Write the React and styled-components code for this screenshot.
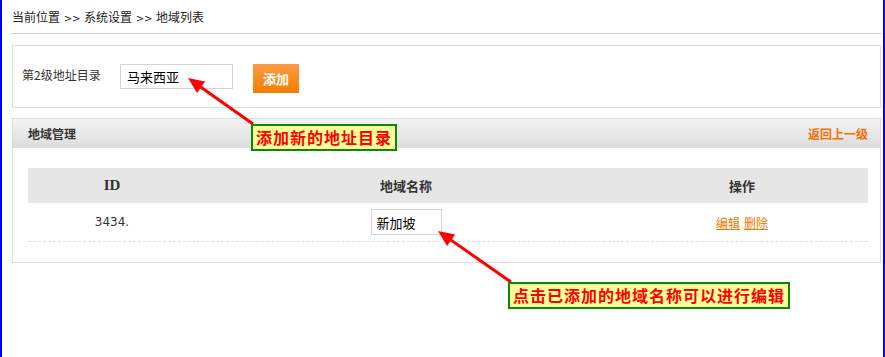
import React from "react";
import styled, { createGlobalStyle } from "styled-components";

const GlobalStyle = createGlobalStyle`
    body {
        margin: 0;
        background: #fff;
        font-family: "Noto Sans CJK SC", sans-serif;
        font-size: 12px;
        color: #333;
    }
`;

const crumbs = ["当前位置", "系统设置", "地域列表"];
const rows = [{ id: "3434.", name: "新加坡" }];

const notes = [
    { text: "添加新的地址目录", left: 251, top: 124, from: [253, 124], to: [188, 78] },
    { text: "点击已添加的地域名称可以进行编辑", left: 508, top: 282, from: [511, 282], to: [438, 231] },
];

function arrowHead([x1, y1], [x2, y2]) {
    const len = 16;
    const half = 7;
    const dx = x2 - x1;
    const dy = y2 - y1;
    const d = Math.hypot(dx, dy);
    const ux = dx / d;
    const uy = dy / d;
    const bx = x2 - ux * len;
    const by = y2 - uy * len;
    return `${x2},${y2} ${bx - uy * half},${by + ux * half} ${bx + uy * half},${by - ux * half}`;
}

export default function App() {
    return (
        <Frame>
            <GlobalStyle />
            <Breadcrumb>
                {crumbs.map((c, i) => (
                    <React.Fragment key={c}>
                        {i > 0 && <Sep>&gt;&gt;</Sep>}
                        {c}
                    </React.Fragment>
                ))}
            </Breadcrumb>

            <AddBox>
                <Label>第2级地址目录</Label>
                <TextInput defaultValue="马来西亚" />
                <AddButton>添加</AddButton>
            </AddBox>

            <Panel>
                <PanelHeader>
                    <PanelTitle>地域管理</PanelTitle>
                    <BackLink href="#">返回上一级</BackLink>
                </PanelHeader>
                <PanelBody>
                    <Table>
                        <colgroup>
                            <col style={{ width: "20%" }} />
                            <col style={{ width: "50%" }} />
                            <col style={{ width: "30%" }} />
                        </colgroup>
                        <thead>
                            <tr>
                                <Th $latin>ID</Th>
                                <Th>地域名称</Th>
                                <Th>操作</Th>
                            </tr>
                        </thead>
                        <tbody>
                            {rows.map((row) => (
                                <tr key={row.id}>
                                    <IdCell>{row.id}</IdCell>
                                    <Td>
                                        <NameInput defaultValue={row.name} />
                                    </Td>
                                    <Td>
                                        <ActionLink href="#">编辑</ActionLink>
                                        <ActionLink href="#">删除</ActionLink>
                                    </Td>
                                </tr>
                            ))}
                        </tbody>
                    </Table>
                </PanelBody>
            </Panel>

            <Arrows width="885" height="357">
                {notes.map((n) => {
                    const d = Math.hypot(n.to[0] - n.from[0], n.to[1] - n.from[1]);
                    const ex = n.to[0] - ((n.to[0] - n.from[0]) / d) * 12;
                    const ey = n.to[1] - ((n.to[1] - n.from[1]) / d) * 12;
                    return (
                        <g key={n.text}>
                            <line x1={n.from[0]} y1={n.from[1]} x2={ex} y2={ey} stroke="#f00" strokeWidth="3" />
                            <polygon points={arrowHead(n.from, n.to)} fill="#f00" />
                        </g>
                    );
                })}
            </Arrows>
            {notes.map((n) => (
                <Note key={n.text} style={{ left: n.left, top: n.top }}>
                    {n.text}
                </Note>
            ))}
        </Frame>
    );
}

const Frame = styled.div`
    position: relative;
    min-height: 357px;
    box-sizing: border-box;
    border-left: 2px solid #0000ff;
    border-right: 2px solid #0000ff;
    padding: 0 2px 0 9px;
`;
const Breadcrumb = styled.div`
    height: 33px;
    line-height: 34px;
    padding-left: 1px;
    border-bottom: 1px solid #cfcfcf;
    color: #222;
`;
const Sep = styled.span`
    display: inline-block;
    width: 24px;
    text-align: center;
    font-family: "DejaVu Sans", sans-serif;
    font-size: 10px;
`;
const AddBox = styled.div`
    margin-top: 11px;
    margin-left: 1px;
    height: 43px;
    padding: 18px 0 0 9px;
    border: 1px solid #ddd;
    display: flex;
    align-items: flex-start;
`;
const Label = styled.span`
    width: 98px;
    line-height: 22px;
    color: #333;
`;
const TextInput = styled.input`
    box-sizing: border-box;
    width: 113px;
    height: 25px;
    padding: 0 6px;
    border: 1px solid #d5d5d5;
    font-family: "Noto Sans CJK SC", sans-serif;
    font-size: 13px;
    color: #000;
    outline: none;
`;
const AddButton = styled.button`
    margin-left: 20px;
    width: 46px;
    height: 29px;
    border: 0;
    padding: 0;
    background: linear-gradient(#fa9c45, #f77d00);
    color: #fff;
    font-family: "Noto Sans CJK SC", sans-serif;
    font-size: 13px;
    font-weight: bold;
    cursor: pointer;
`;
const Panel = styled.div`
    margin-top: 10px;
    margin-left: 1px;
    border: 1px solid #ddd;
`;
const PanelHeader = styled.div`
    height: 29px;
    padding: 0 12px 0 15px;
    background: linear-gradient(#f4f4f4, #dcdcdc);
    display: flex;
    align-items: center;
    justify-content: space-between;
`;
const PanelTitle = styled.span`
    font-weight: bold;
    color: #333;
`;
const BackLink = styled.a`
    font-weight: bold;
    color: #f66f00;
    text-decoration: none;
`;
const PanelBody = styled.div`
    padding: 20px 12px 20px 15px;
`;
const Table = styled.table`
    width: 100%;
    border-collapse: collapse;
    table-layout: fixed;
`;
const Th = styled.th`
    height: 35px;
    padding: 0;
    background: #e6e6e6;
    font-family: "Liberation Serif", "Noto Sans CJK SC", serif;
    font-size: ${(p) => (p.$latin ? "15px" : "13px")};
    font-weight: bold;
    color: #333;
    text-align: center;
`;
const Td = styled.td`
    height: 38px;
    padding: 0;
    text-align: center;
    border-bottom: 1px dashed #ddd;
`;
const IdCell = styled(Td)`
    font-family: "DejaVu Sans", sans-serif;
    font-size: 12px;
    color: #333;
`;
const NameInput = styled(TextInput)`
    width: 71px;
    height: 26px;
    padding: 0 5px;
    vertical-align: middle;
`;
const ActionLink = styled.a`
    margin: 0 2px;
    color: #f07800;
    text-decoration: underline;
`;
const Arrows = styled.svg`
    position: absolute;
    left: -2px;
    top: 0;
    pointer-events: none;
`;
const Note = styled.div`
    position: absolute;
    box-sizing: border-box;
    height: 27px;
    padding: 0 3px 0 3px;
    margin-left: -2px;
    border: 2px solid #0a8a0a;
    background: #ffff99;
    color: #ff0000;
    font-family: "Noto Sans CJK SC", serif;
    font-size: 16px;
    font-weight: bold;
    line-height: 23px;
    letter-spacing: 1px;
    white-space: nowrap;
`;
